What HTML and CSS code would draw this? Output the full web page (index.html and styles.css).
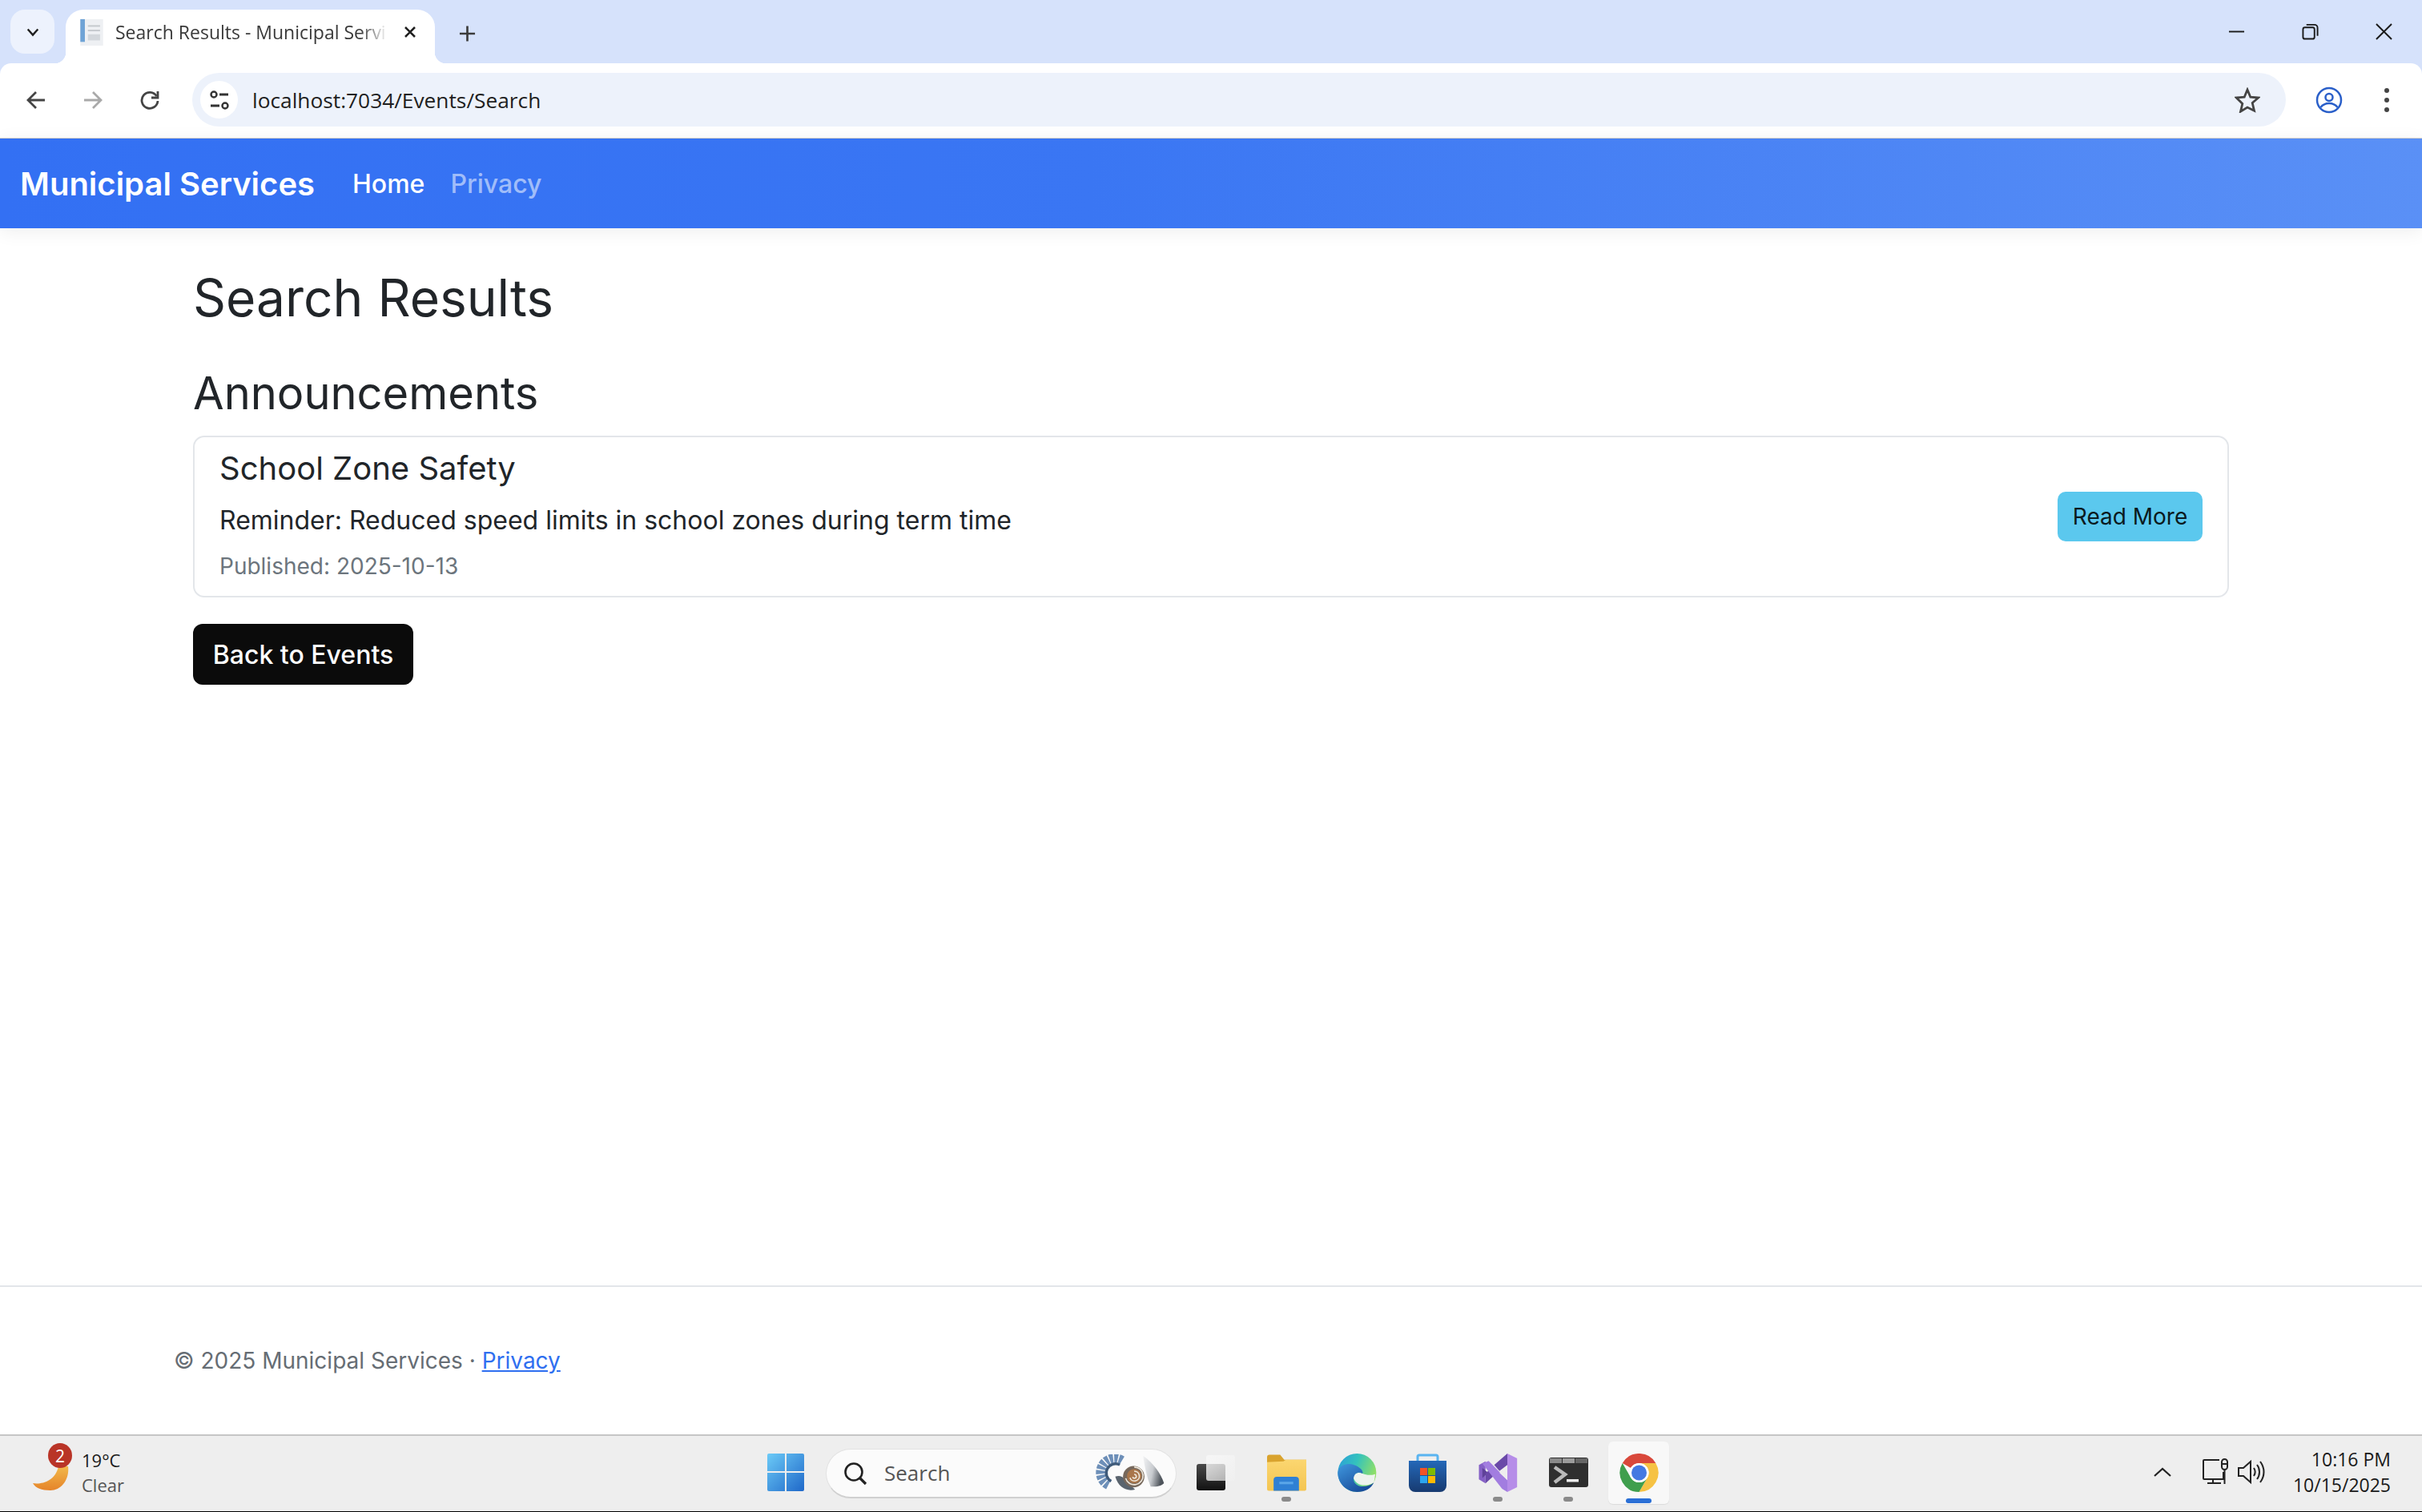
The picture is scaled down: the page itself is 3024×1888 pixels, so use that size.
FILE: index.html
```html
<!DOCTYPE html>
<html lang="en">
<head>
<meta charset="utf-8">
<title>Search Results - Municipal Services</title>
<link rel="stylesheet" href="styles.css">
</head>
<body>
<div class="page">
  <header class="browser">
    <div class="tabstrip">
      <button class="tab-menu" aria-label="Tab list"><svg class="ico-20" viewBox="0 0 20 20"><path d="M3 6l7 8 7-8" fill="none" stroke="#1f1f1f" stroke-width="2.6"/></svg></button>
      <div class="tab">
        <svg class="favicon" viewBox="0 0 32 38"><rect x="1" y="2" width="30" height="35" fill="#eef0f3"/><rect x="1" y="2" width="6" height="30" fill="#6fa3d6"/><rect x="11" y="10" width="16" height="2" fill="#c4c8cd"/><rect x="11" y="16" width="16" height="2" fill="#c4c8cd"/><rect x="11" y="22" width="16" height="8" fill="#d3d7dc"/></svg>
        <span class="tab-title">Search Results - Municipal Servi</span>
        <svg class="ico-tabclose" viewBox="0 0 16 16"><path d="M2 2l12 12M14 2L2 14" stroke="#1f1f1f" stroke-width="2.6"/></svg>
      </div>
      <svg class="ico-plus" viewBox="0 0 22 22"><path d="M11 1v20M1 11h20" stroke="#3c3c3c" stroke-width="2.8"/></svg>
      <div class="window-controls">
        <svg class="win-ico" viewBox="0 0 22 22"><path d="M1 11h20" stroke="#1a1a1a" stroke-width="2"/></svg>
        <svg class="win-ico" viewBox="0 0 22 22"><rect x="1.5" y="5.5" width="15" height="15" rx="2.5" fill="none" stroke="#1a1a1a" stroke-width="2"/><path d="M6 2h10.500a4 4 0 0 1 4 4v10.500" fill="none" stroke="#1a1a1a" stroke-width="2"/></svg>
        <svg class="win-ico" viewBox="0 0 22 22"><path d="M1 1l20 20M21 1L1 21" stroke="#1a1a1a" stroke-width="2"/></svg>
      </div>
    </div>
    <div class="toolbar">
      <svg class="nav-ico" viewBox="0 0 26 26"><path d="M24 13H4M13 3L3 13l10 10" fill="none" stroke="#444" stroke-width="2.800"/></svg>
      <svg class="nav-ico" viewBox="0 0 26 26"><path d="M2 13h20M13 3l10 10-10 10" fill="none" stroke="#a9a9a9" stroke-width="2.800"/></svg>
      <svg class="nav-ico" viewBox="0 0 26 26"><path d="M21.500 8A10 10 0 1 0 23 14" fill="none" stroke="#444" stroke-width="2.800"/><path d="M23 2v8h-8" fill="none" stroke="#444" stroke-width="2.800"/></svg>
      <div class="omnibox">
        <span class="site-info"><svg class="ico-tune" viewBox="0 0 26 26"><circle cx="6" cy="6" r="3.500" fill="none" stroke="#333" stroke-width="2.400"/><path d="M13 6h11M2 20h11" stroke="#333" stroke-width="2.800"/><circle cx="20" cy="20" r="3.500" fill="none" stroke="#333" stroke-width="2.400"/></svg></span>
        <span class="url">localhost:7034/Events/Search</span>
        <svg class="ico-star" viewBox="0 0 32 32"><path d="M16 3l3.800 9.200 9.900.8-7.500 6.500 2.300 9.700L16 25l-8.500 5.200 2.300-9.700L2.300 13l9.900-.8z" fill="none" stroke="#444" stroke-width="2.800"/></svg>
      </div>
      <svg class="ico-profile" viewBox="0 0 34 34"><circle cx="17" cy="17" r="15" fill="none" stroke="#2a5fc9" stroke-width="2.500"/><circle cx="17" cy="13.500" r="4.500" fill="none" stroke="#2a5fc9" stroke-width="2.500"/><path d="M6.500 26c3-4 6.500-5 10.500-5s7.500 1 10.500 5" fill="none" stroke="#2a5fc9" stroke-width="2.500"/></svg>
      <svg class="ico-dots" viewBox="0 0 8 32"><circle cx="4" cy="4" r="3" fill="#444"/><circle cx="4" cy="16" r="3" fill="#444"/><circle cx="4" cy="28" r="3" fill="#444"/></svg>
    </div>
  </header>

  <nav class="navbar">
    <a class="brand">Municipal Services</a>
    <a class="nav-link nav-active">Home</a>
    <a class="nav-link nav-muted">Privacy</a>
  </nav>

  <main class="content">
    <div class="container">
      <h1 class="page-title">Search Results</h1>
      <h2 class="section-title">Announcements</h2>
      <article class="card">
        <div class="card-text">
          <h3 class="card-title">School Zone Safety</h3>
          <p class="card-body">Reminder: Reduced speed limits in school zones during term time</p>
          <p class="card-meta">Published: 2025-10-13</p>
        </div>
        <a class="btn-info">Read More</a>
      </article>
      <a class="btn-dark">Back to Events</a>
    </div>
  </main>

  <footer class="footer">
    <span class="footer-text">© 2025 Municipal Services · <a class="footer-link">Privacy</a></span>
  </footer>

  <div class="taskbar">
    <div class="weather">
      <div class="weather-icon">
        <svg class="ico-moon" viewBox="0 0 46 30"><defs><linearGradient id="moon" x1="0" y1="0" x2="0" y2="1"><stop offset="0" stop-color="#f2b84a"/><stop offset="1" stop-color="#e5842a"/></linearGradient></defs><path d="M1 21c10 2 28-2 32-21h12c2 16-8 30-22 30C12 30 4 27 1 21z" fill="url(#moon)"/></svg>
        <span class="badge">2</span>
      </div>
      <div class="weather-text"><span class="temp">19°C</span><span class="cond">Clear</span></div>
    </div>
    <div class="task-cell">
      <svg class="ico-start" viewBox="0 0 46 47"><defs><linearGradient id="win" x1="0" y1="0" x2="1" y2="1"><stop offset="0" stop-color="#6ccbf7"/><stop offset="1" stop-color="#1f68c9"/></linearGradient></defs><path d="M0 2a2 2 0 0 1 2-2h20v22H0zM24 0h20a2 2 0 0 1 2 2v20H24zM0 24h22v23H2a2 2 0 0 1-2-2zM24 24h22v21a2 2 0 0 1-2 2H24z" fill="url(#win)"/></svg>
    </div>
    <div class="search-pill">
      <svg class="ico-search" viewBox="0 0 30 30"><circle cx="13" cy="13" r="10.500" fill="none" stroke="#222" stroke-width="2.600"/><path d="M20.500 20.500L28 28" stroke="#222" stroke-width="3.200"/></svg>
      <span class="search-label">Search</span>
      <svg class="ico-shell" viewBox="30 45 260 140">
        <defs><linearGradient id="horn" x1="0" y1="0" x2="1" y2="0.300"><stop offset="0" stop-color="#f2f3f4"/><stop offset="0.550" stop-color="#c9ccd0"/><stop offset="1" stop-color="#4f555c"/></linearGradient></defs>
        <path d="M128 68A52 52 0 1 0 80 160" fill="none" stroke="#6d8fb8" stroke-width="36" stroke-dasharray="13 4"/>
        <path d="M120 84A34 34 0 0 0 88 145" fill="none" stroke="#3f5b7a" stroke-width="10"/>
        <path d="M103 128c14-6 26-2 34 8l40 40c-30 8-62-6-74-48z" fill="#5a646e"/>
        <circle cx="172" cy="128" r="40" fill="#76685c"/>
        <circle cx="174" cy="126" r="27" fill="#a9764b"/>
        <path d="M174 92a33 33 0 1 1-32 42M174 108a18 18 0 1 1-16 24M174 120a7 7 0 1 1-6 9" fill="none" stroke="#efe8dc" stroke-width="5"/>
        <path d="M207 50c40 28 66 68 78 102-12 12-32 14-50 13-14-35-23-75-28-115z" fill="url(#horn)"/>
      </svg>
    </div>
    <div class="task-cell">
      <div class="taskview"><span class="tv-back"></span><span class="tv-front"></span></div>
    </div>
    <div class="task-cell">
      <svg class="ico-app" viewBox="0 0 48 46"><defs><linearGradient id="fold" x1="0" y1="0" x2="0" y2="1"><stop offset="0" stop-color="#fbd670"/><stop offset="1" stop-color="#f4c552"/></linearGradient></defs><path d="M0 4a3 3 0 0 1 3-3h13l5 6h27v6H0z" fill="#d9a32e"/><path d="M0 10l20-1 3-2h25v36a2 2 0 0 1-2 2H2a2 2 0 0 1-2-2z" fill="url(#fold)"/><path d="M8 45V32a4 4 0 0 1 4-4h23a4 4 0 0 1 4 4v13z" fill="#2f80d4"/><rect x="15" y="34" width="17" height="3" fill="#5aa6e8"/></svg>
      <span class="dot"></span>
    </div>
    <div class="task-cell">
      <svg class="ico-app" viewBox="298 42 147 146"><defs><linearGradient id="edge1" x1="0" y1="0" x2="1" y2="0.400"><stop offset="0" stop-color="#2a9bdc"/><stop offset="0.500" stop-color="#34c3bc"/><stop offset="1" stop-color="#8fdf68"/></linearGradient><linearGradient id="edge2" x1="0" y1="0" x2="0.700" y2="1"><stop offset="0" stop-color="#3f97de"/><stop offset="1" stop-color="#174a98"/></linearGradient></defs><circle cx="371" cy="115" r="73" fill="url(#edge1)"/><path d="M356 130c4-12 20-20 36-12 14 6 30 8 48 2-1 11-3 22-5 32-30 18-70 14-79-22z" fill="#eef3ee"/><path d="M298 115c2-30 36-40 62-30 22 8 36 22 32 33-12-6-24-4-29 4-12 18-2 38 16 43 14 4 38 2 56-13-10 22-34 36-64 36-40 0-73-33-73-73z" fill="url(#edge2)"/></svg>
    </div>
    <div class="task-cell">
      <svg class="ico-store" viewBox="0 0 47 48"><defs><linearGradient id="bag" x1="0" y1="0" x2="0" y2="1"><stop offset="0" stop-color="#2468b8"/><stop offset="1" stop-color="#173a70"/></linearGradient></defs><path d="M11 11V4a2 2 0 0 1 2-2h21a2 2 0 0 1 2 2v7" fill="none" stroke="#5ab4f0" stroke-width="3"/><path d="M0 9h47v31a8 8 0 0 1-8 8H8a8 8 0 0 1-8-8z" fill="url(#bag)"/><rect x="14" y="18" width="9" height="9" fill="#f25325"/><rect x="24" y="18" width="9" height="9" fill="#7fba00"/><rect x="14" y="28" width="9" height="9" fill="#2ba6ef"/><rect x="24" y="28" width="9" height="9" fill="#fdb900"/></svg>
    </div>
    <div class="task-cell">
      <svg class="ico-app" viewBox="47 42 146 146"><path d="M155 42l37 18v110l-37 18z" fill="#b68de8"/><path d="M155 42l-50 43 20 23 30-23z" fill="#6a49a8"/><path d="M47 85l25-13v83l-25-15z" fill="#8560c6"/><path d="M60 97l22 18-22 20z" fill="#5f4299"/><path d="M72 155l40-36-20-20-20 18z" fill="#6a49a8"/><path d="M60 80l24-10 71 72v46l-20-12z" fill="#a27de0"/><path d="M155 88l-30 27 30 28z" fill="#eeeeee"/></svg>
      <span class="dot"></span>
    </div>
    <div class="task-cell">
      <svg class="ico-term" viewBox="0 0 49 37"><rect width="49" height="37" rx="3" fill="#2f2f2f"/><rect x="1" y="1" width="15" height="6" fill="#8a8a8a"/><rect x="17" y="1" width="15" height="6" fill="#9c9c9c"/><rect x="33" y="1" width="15" height="6" fill="#666"/><path d="M7 12l13 9-13 10" fill="none" stroke="#b9b9b9" stroke-width="4.500"/><rect x="22" y="27" width="15" height="3.500" fill="#ececec"/></svg>
      <span class="dot"></span>
    </div>
    <div class="task-cell">
      <div class="active-box">
        <svg class="ico-app" viewBox="0 0 48 48"><path d="M3.200 12A24 24 0 0 1 44.800 12H24A12 12 0 0 0 13.600 18z" fill="#d9483b"/><path d="M44.800 12A24 24 0 0 1 24 48L34.400 30A12 12 0 0 0 24 12z" fill="#f6c244"/><path d="M24 48A24 24 0 0 1 3.200 12L13.600 30A12 12 0 0 0 34.400 30z" fill="#3f9e4d"/><circle cx="24" cy="24" r="12" fill="#fff"/><circle cx="24" cy="24" r="9.500" fill="#4479e2"/></svg>
        <span class="dot-active"></span>
      </div>
    </div>
    <div class="tray">
      <svg class="ico-chevron" viewBox="0 0 22 12"><path d="M1 11l10-9 10 9" fill="none" stroke="#222" stroke-width="2.200"/></svg>
      <svg class="ico-net" viewBox="0 0 32 33"><path d="M21 2H2a1 1 0 0 0-1 1v22a1 1 0 0 0 1 1h24v-9" fill="none" stroke="#222" stroke-width="2"/><path d="M6 31h17M13 26v5" stroke="#222" stroke-width="2"/><rect x="24" y="1" width="7" height="13" rx="3.500" fill="none" stroke="#222" stroke-width="2"/><path d="M24 7h7M27.500 14v18" stroke="#222" stroke-width="2"/></svg>
      <svg class="ico-vol" viewBox="0 0 34 30"><path d="M1 10h6l9-8v26l-9-8H1z" fill="none" stroke="#222" stroke-width="2"/><path d="M20 10c2 3 2 7 0 10M24 6c4 5 4 13 0 18M28 2c6 8 6 18 0 26" fill="none" stroke="#222" stroke-width="2"/></svg>
      <div class="clock"><span>10:16 PM</span><span>10/15/2025</span></div>
    </div>
  </div>
</div>
</body>
</html>
```

FILE: styles.css
```css
* { box-sizing: border-box; }
html, body { margin: 0; padding: 0; }
body { background: #fff; font-family: Inter, "Liberation Sans", sans-serif; color: #212529; }
.page { width: 3024px; height: 1888px; display: flex; flex-direction: column; overflow: hidden; }

/* browser frame */
.browser { background: #d6e2fb; font-family: "Open Sans", "Noto Sans", sans-serif; }
.tabstrip { height: 79px; display: flex; align-items: flex-start; position: relative; padding: 12px 0 0 13px; }
.tab-menu { width: 55px; height: 55px; border: 0; padding: 0; border-radius: 18px; background: #edf2fd; display: flex; align-items: center; justify-content: center; }
.ico-20 { width: 18px; height: 18px; }
.tab { position: relative; width: 461px; height: 67px; margin-left: 14px; background: #fff; border-radius: 22px 22px 0 0; display: flex; align-items: center; padding: 0 0 11px 17px; }
.tab::before, .tab::after { content: ""; position: absolute; bottom: 0; width: 14px; height: 14px; }
.tab::before { left: -14px; background: radial-gradient(circle at 0 0, transparent 14px, #fff 14.500px); }
.tab::after { right: -14px; background: radial-gradient(circle at 100% 0, transparent 14px, #fff 14.500px); }
.favicon { width: 31px; height: 36px; flex: none; }
.tab-title { width: 340px; margin-left: 14px; font-size: 23px; color: #3a3a3a; white-space: nowrap; -webkit-mask-image: linear-gradient(90deg, #000 90%, transparent 100%); mask-image: linear-gradient(90deg, #000 90%, transparent 100%); }
.ico-tabclose { width: 16px; height: 18px; margin-left: 20px; flex: none; }
.ico-plus { width: 21px; height: 22px; margin: 19px 0 0 30px; }
.window-controls { margin-left: auto; display: flex; gap: 71px; padding: 17px 37px 0 0; }
.win-ico { width: 21px; height: 21px; display: block; }

.toolbar { height: 94px; background: #fff; border-radius: 14px 14px 0 0; border-bottom: 1px solid #d8d4cf; display: flex; align-items: center; padding: 0 0 2px 32px; }
.nav-ico { width: 26px; height: 26px; flex: none; margin-right: 45px; }
.nav-ico:nth-child(3) { margin-right: 40px; }
.omnibox { width: 2614px; height: 67px; border-radius: 34px; background: #edf2fb; display: flex; align-items: center; padding-left: 10px; padding-right: 32px; }
.site-info { width: 47px; height: 47px; border-radius: 50%; background: #fff; display: flex; align-items: center; justify-content: center; flex: none; }
.ico-tune { width: 26px; height: 26px; }
.url { margin-left: 18px; font-size: 26.300px; color: #1f1f1f; }
.ico-star { width: 32px; height: 32px; margin-left: auto; }
.ico-profile { width: 34px; height: 34px; margin-left: 37px; flex: none; }
.ico-dots { width: 8px; height: 32px; margin-left: 51px; flex: none; }

/* site nav */
.navbar { height: 112px; flex: none; display: flex; align-items: center; padding: 0 0 0 25px; background: linear-gradient(90deg, #3370f3 0%, #3a76f3 45%, #5a90f6 100%); box-shadow: 0 4px 22px rgba(0, 0, 0, .07); position: relative; }
.brand { font-size: 40px; font-weight: 600; color: #fff; margin-right: 47px; }
.nav-link { font-size: 32px; font-weight: 500; margin-right: 32px; }
.nav-active { color: #fff; }
.nav-muted { color: rgba(255, 255, 255, .55); }

/* content */
.content { flex: 1; }
.container { width: 2542px; margin: 0 auto; padding-top: 51px; }
.page-title { margin: 0; font-size: 64px; line-height: 72px; font-weight: 400; }
.section-title { margin: 51px 0 21px; font-size: 56px; line-height: 64px; font-weight: 400; }
.card { height: 202px; border: 2px solid #e3e6ea; border-radius: 14px; display: flex; align-items: center; justify-content: space-between; padding: 0 31px 2px 31px; }
.card-title { margin: 0; font-size: 40px; line-height: 50px; font-weight: 400; }
.card-body { margin: 17px 0 13px; font-size: 32px; line-height: 46px; }
.card-meta { margin: 0; font-size: 28px; line-height: 42px; color: #6c757d; }
.btn-info { width: 181px; height: 62px; margin-top: 2px; border-radius: 10px; background: #5bc8ee; color: #0b1a20; font-size: 28px; display: flex; align-items: center; justify-content: center; }
.btn-dark { width: 275px; height: 76px; margin-top: 33px; border-radius: 12px; background: #0b0b0b; color: #fff; font-size: 32px; font-weight: 500; display: flex; align-items: center; justify-content: center; }

/* footer */
.footer { height: 186px; flex: none; border-top: 2px solid #e3e6ea; display: flex; align-items: center; padding-left: 217px; }
.footer-text { font-size: 28px; color: #666d74; }
.footer-link { color: #2f6ff0; text-decoration: underline; }

/* taskbar */
.taskbar { height: 97px; flex: none; background: #eeeeee; border-top: 2px solid #c6c6c6; border-bottom: 1px solid #000; display: flex; align-items: center; font-family: "Open Sans", "Noto Sans", sans-serif; }
.weather { width: 937px; height: 100%; display: flex; align-items: center; flex: none; padding-left: 40px; }
.weather-icon { width: 62px; height: 100%; position: relative; flex: none; }
.ico-moon { position: absolute; left: 0; top: 38px; width: 46px; height: 30px; }
.badge { position: absolute; left: 20px; top: 9px; width: 30px; height: 31px; border-radius: 50%; background: #b93427; color: #fff; font-size: 21px; display: flex; align-items: center; justify-content: center; }
.weather-text { display: flex; flex-direction: column; gap: 5px; padding-bottom: 3px; font-size: 22px; line-height: 26px; }
.temp { color: #1a1a1a; }
.cond { color: #555; }

.task-cell { width: 88px; height: 100%; flex: none; display: flex; align-items: center; justify-content: center; position: relative; padding-bottom: 3px; }
.ico-start { width: 46px; height: 47px; }
.search-pill { width: 438px; height: 62px; margin: 0 5px 0 6px; flex: none; border-radius: 31px; background: #fbfbfb; border: 1px solid #e2e2e2; border-bottom: 2px solid #d0d0d0; display: flex; align-items: center; padding: 0 13px 0 21px; }
.ico-search { width: 30px; height: 30px; flex: none; }
.search-label { margin-left: 21px; padding-bottom: 2px; font-size: 26px; color: #555; }
.ico-shell { width: 87px; height: 47px; margin-left: auto; }
.taskview { width: 48px; height: 44px; position: relative; }
.tv-back { position: absolute; left: 0; bottom: 0; width: 36px; height: 33px; background: linear-gradient(#4a4a4a, #111); border-radius: 3px; }
.tv-front { position: absolute; right: 0; top: 0; width: 36px; height: 32px; background: linear-gradient(135deg, rgba(248, 248, 248, .85), rgba(240, 240, 240, .65)); border-radius: 3px; }
.ico-app { width: 49px; height: 48px; display: block; }
.ico-store { width: 47px; height: 48px; }
.ico-term { width: 49px; height: 37px; }
.dot { position: absolute; bottom: 12px; left: 38px; width: 12px; height: 6px; border-radius: 3px; background: #8a8a8a; }
.active-box { width: 76px; height: 78px; margin-top: 1px; border-radius: 6px; background: #f8f8f8; display: flex; align-items: center; justify-content: center; position: relative; box-shadow: 0 1px 1px rgba(0, 0, 0, .08); }
.dot-active { position: absolute; bottom: 1px; left: 22px; width: 32px; height: 6px; border-radius: 3px; background: #2a6fd6; }

.tray { margin-left: auto; display: flex; align-items: center; padding: 0 39px 5px 0; }
.ico-chevron { width: 22px; height: 12px; }
.ico-net { width: 32px; height: 33px; margin-left: 39px; }
.ico-vol { width: 34px; height: 30px; margin-left: 12px; }
.clock { margin-left: 35px; display: flex; flex-direction: column; align-items: flex-end; gap: 6px; font-size: 23px; line-height: 26px; color: #1a1a1a; }
```
